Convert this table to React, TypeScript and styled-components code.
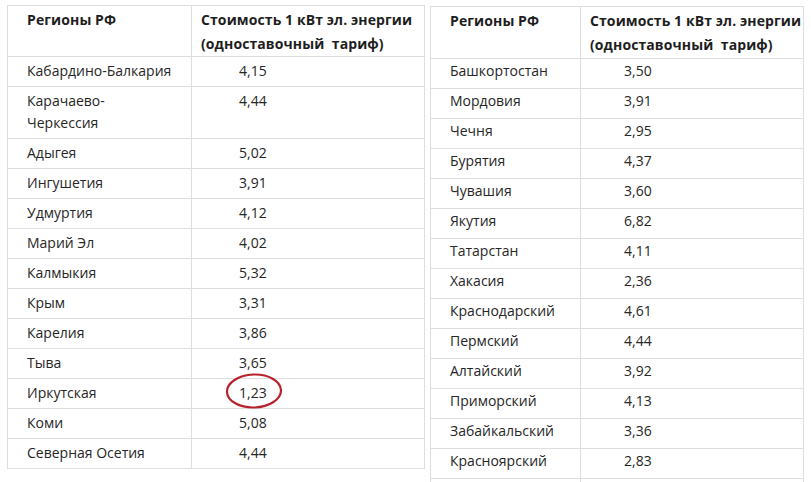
import React from 'react';
import styled, { createGlobalStyle } from 'styled-components';

const GlobalStyle = createGlobalStyle`
  html, body {
    margin: 0;
    padding: 0;
    background: #ffffff;
  }
  body {
    width: 811px;
    height: 482px;
    overflow: hidden;
    font-family: "Open Sans", "Noto Sans", sans-serif;
    color: #222;
  }
`;

const Page = styled.div`
  display: flex;
  align-items: flex-start;
  gap: 5px;
  padding: 5px 0 0 7px;
`;

const Table = styled.table<{ $width: number; $offset?: number }>`
  width: ${p => p.$width}px;
  border-collapse: collapse;
  margin-top: ${p => p.$offset || 0}px;
  font-size: 14px;
  table-layout: fixed;

  th, td {
    box-sizing: border-box;
  }
`;

const HeadCell = styled.th<{ $width?: number; $pad: number; $padBottom: number }>`
  width: ${p => (p.$width ? `${p.$width}px` : 'auto')};
  border: 1px solid #dedede;
  padding: 2px 0 ${p => p.$padBottom}px ${p => p.$pad}px;
  text-align: left;
  vertical-align: top;
  font-size: 14px;
  letter-spacing: 0.1px;
  font-weight: 700;
  line-height: 24px;
  white-space: nowrap;
  color: #1e1e1e;
`;

const Cell = styled.td<{ $pad: number; $top: number }>`
  border: 1px solid #dedede;
  padding: ${p => p.$top}px 4px ${p => 7 - p.$top}px ${p => p.$pad}px;
  line-height: 22px;
  vertical-align: top;
  color: #262626;
`;

const Marked = styled.span`
  position: relative;
  display: inline-block;
`;

const Ring = styled.svg`
  position: absolute;
  left: -13px;
  top: -9px;
  width: 56px;
  height: 36px;
  overflow: visible;
`;

type Row = [string, string, boolean?];

const leftRows: Row[] = [
  ['Кабардино-Балкария', '4,15'],
  ['Карачаево-\nЧеркессия', '4,44'],
  ['Адыгея', '5,02'],
  ['Ингушетия', '3,91'],
  ['Удмуртия', '4,12'],
  ['Марий Эл', '4,02'],
  ['Калмыкия', '5,32'],
  ['Крым', '3,31'],
  ['Карелия', '3,86'],
  ['Тыва', '3,65'],
  ['Иркутская', '1,23', true],
  ['Коми', '5,08'],
  ['Северная Осетия', '4,44'],
];

const rightRows: Row[] = [
  ['Башкортостан', '3,50'],
  ['Мордовия', '3,91'],
  ['Чечня', '2,95'],
  ['Бурятия', '4,37'],
  ['Чувашия', '3,60'],
  ['Якутия', '6,82'],
  ['Татарстан', '4,11'],
  ['Хакасия', '2,36'],
  ['Краснодарский', '4,61'],
  ['Пермский', '4,44'],
  ['Алтайский', '3,92'],
  ['Приморский', '4,13'],
  ['Забайкальский', '3,36'],
  ['Красноярский', '2,83'],
  ['', ''],
];

interface TariffTableProps {
  rows: Row[];
  width: number;
  nameWidth: number;
  valuePad: number;
  headBottom: number;
  cellTop: number;
  offset?: number;
}

const TariffTable: React.FC<TariffTableProps> = ({ rows, width, nameWidth, valuePad, headBottom, cellTop, offset }) => (
  <Table $width={width} $offset={offset}>
    <thead>
      <tr>
        <HeadCell $width={nameWidth} $pad={19} $padBottom={headBottom}>Регионы РФ</HeadCell>
        <HeadCell $pad={9} $padBottom={headBottom}>
          Стоимость 1 кВт эл. энергии
          <br />
          (одноставочный&nbsp; тариф)
        </HeadCell>
      </tr>
    </thead>
    <tbody>
      {rows.map(([name, value, marked], i) => (
        <tr key={i}>
          <Cell $pad={19} $top={cellTop}>
            {name.split('\n').map((part, j) => (
              <React.Fragment key={j}>
                {j > 0 && <br />}
                {part || '\u00a0'}
              </React.Fragment>
            ))}
          </Cell>
          <Cell $pad={valuePad} $top={cellTop}>
            {marked ? (
              <Marked>
                {value}
                <Ring viewBox="0 0 56 36">
                  <ellipse
                    cx="28"
                    cy="18"
                    rx="27"
                    ry="16.5"
                    fill="none"
                    stroke="#b8232b"
                    strokeWidth="2.2"
                    transform="rotate(-2 28 18)"
                  />
                </Ring>
              </Marked>
            ) : (
              value
            )}
          </Cell>
        </tr>
      ))}
    </tbody>
  </Table>
);

export default function App() {
  return (
    <>
      <GlobalStyle />
      <Page>
        <TariffTable rows={leftRows} width={418} nameWidth={184} valuePad={47} headBottom={0} cellTop={3} />
        <TariffTable rows={rightRows} width={374} nameWidth={150} valuePad={43} headBottom={1} cellTop={1} offset={1} />
      </Page>
    </>
  );
}
